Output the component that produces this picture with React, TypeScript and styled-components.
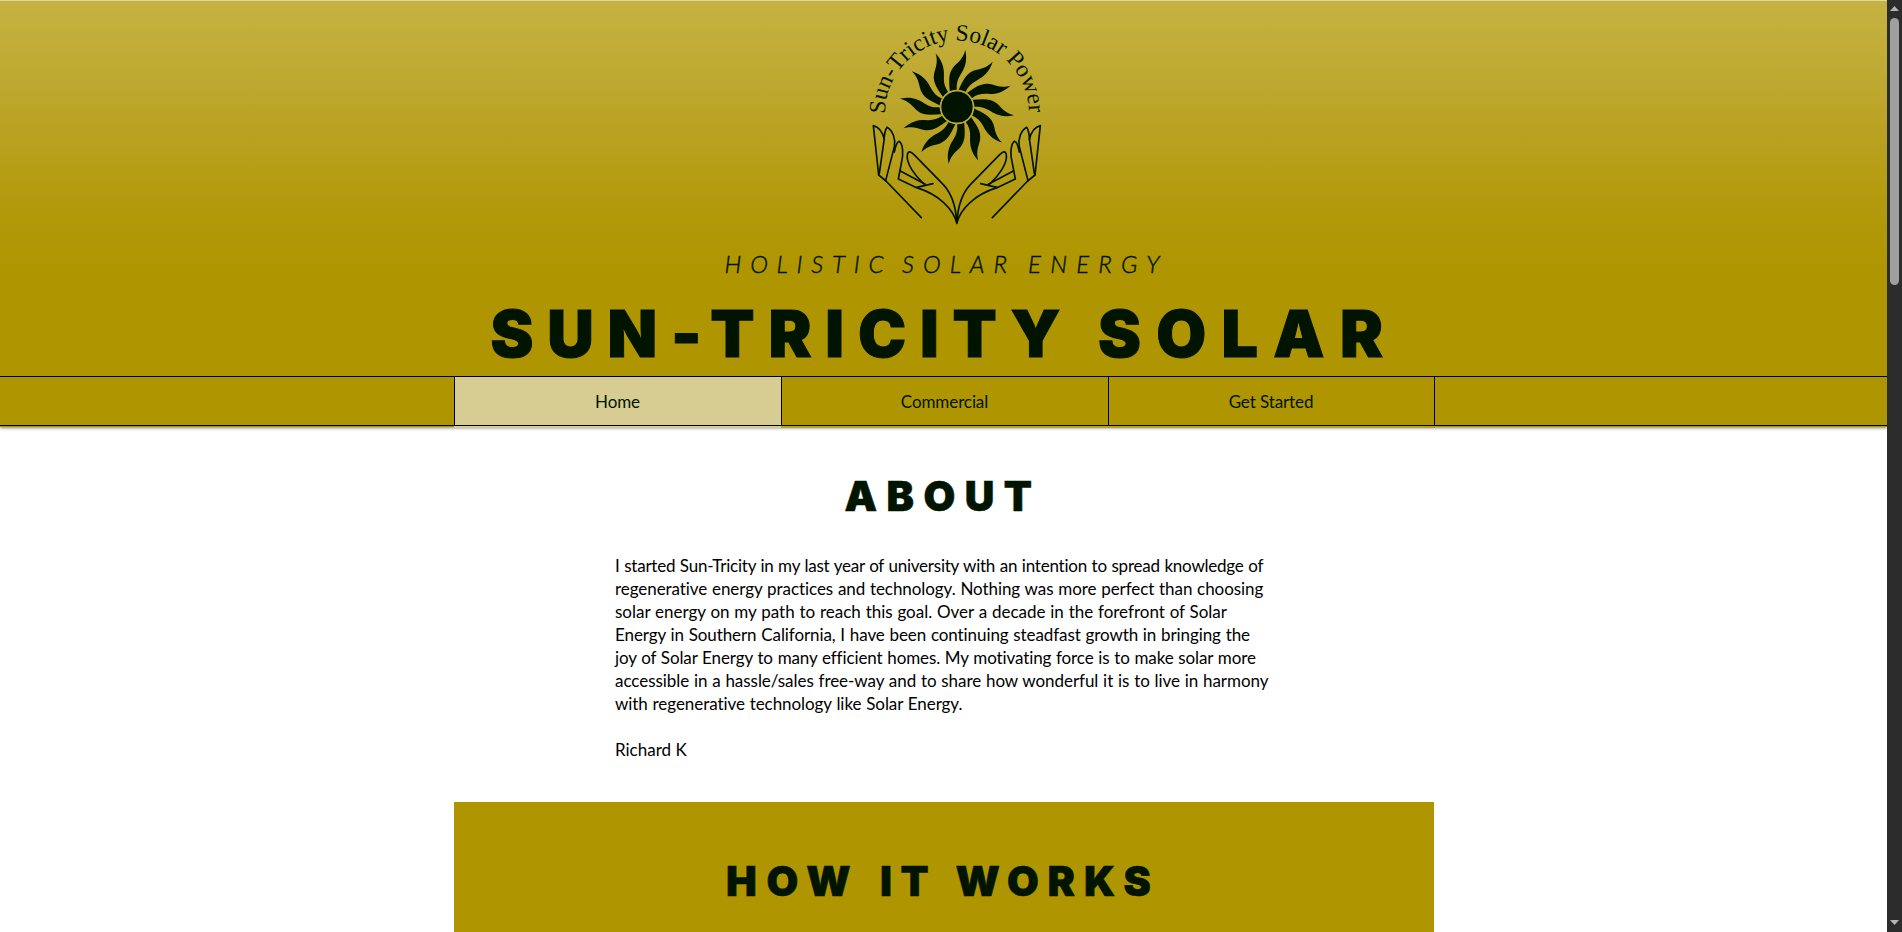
import React from 'react';
import styled, { createGlobalStyle } from 'styled-components';

const INK = '#001400';
const GOLD = '#af9500';

const GlobalStyle = createGlobalStyle`
  html, body { margin: 0; padding: 0; background: #fff; overflow: hidden; }
  * { box-sizing: border-box; }
`;

const Window = styled.div`
  display: flex;
  width: 100%;
  height: 932px;
  overflow: hidden;
  font-family: Lato, 'Liberation Sans', sans-serif;
`;

const Page = styled.div`
  flex: 1;
  min-width: 0;
  height: 932px;
  overflow: hidden;
  background: #fff;
`;

const Header = styled.header`
  height: 427px;
  border-top: 1px solid #e0d7a0;
  background: linear-gradient(#c5b242 0, #bca62b 100px, #b39a0d 200px, ${GOLD} 270px);
  box-shadow: 0 1px 3px rgba(0, 0, 0, 0.5);
`;

const Masthead = styled.div`
  width: 980px;
  height: 375px;
  margin-left: 454px;
  display: flex;
  flex-direction: column;
`;

const Logo = styled.svg`
  display: block;
  width: 210px;
  height: 240px;
  margin-left: 396px;
  overflow: visible;
`;

const Words = styled.div<{ $left: number }>`
  display: flex;
  padding-left: ${p => p.$left}px;
  white-space: nowrap;
  color: ${INK};
  font-variant-ligatures: none;
`;

const Tagline = styled(Words)`
  margin-top: 8px;
  font-size: 24px;
  line-height: 30px;
  font-style: italic;
  font-weight: 300;
  -webkit-text-stroke: 0.4px ${INK};
`;

const Title = styled(Words).attrs({ as: 'h1' })`
  margin: 23px 0 0;
  font: 900 64.5px/64px Inter, sans-serif;
  -webkit-text-stroke: 1px ${INK};
`;

const Heading = styled(Words).attrs({ as: 'h2' })`
  margin: 0;
  font: 900 41px/50px Inter, sans-serif;
  -webkit-text-stroke: 0.6px ${INK};
`;

const Word = styled.span<{ $w: number; $track: number }>`
  flex: none;
  width: ${p => p.$w}px;
  letter-spacing: ${p => p.$track}px;
`;

const Nav = styled.nav`
  height: 50px;
  padding-left: 454px;
  display: flex;
  border-top: 1px solid #000;
  border-bottom: 1px solid #000;
`;

const NavItem = styled.a<{ $w: number; $active?: boolean }>`
  width: ${p => p.$w}px;
  padding-right: 1px;
  display: flex;
  align-items: center;
  justify-content: center;
  border-left: 1px solid #000;
  background: ${p => (p.$active ? '#d7cd92' : GOLD)};
  color: ${INK};
  font-size: 17px;
  letter-spacing: -0.1px;
  &:last-child { border-right: 1px solid #000; }
`;

const NavEdge = styled.div`
  width: 981px;
  height: 2px;
  margin-left: 454px;
  display: flex;
`;

const EdgePart = styled.span<{ $w: number; $active?: boolean }>`
  width: ${p => p.$w}px;
  background: ${p => (p.$active ? '#d3caa0' : '#b7a02c')};
`;

const About = styled.section`
  height: 375px;
  padding-top: 44px;
`;

const Story = styled.div`
  margin: 33px 0 0 615px;
  color: #000;
  font-size: 17px;
  line-height: 23px;
  white-space: nowrap;
  font-variant-ligatures: none;
`;

const Line = styled.div<{ $track: number }>`
  letter-spacing: ${p => p.$track}px;
  word-spacing: 0.5px;
`;

const Signature = styled.div`
  margin-top: 23px;
`;

const HowPanel = styled.section`
  width: 980px;
  height: 130px;
  margin-left: 454px;
  padding-top: 54px;
  background: ${GOLD};
`;

const ScrollTrack = styled.div`
  width: 15px;
  height: 932px;
  padding: 6px 0 7px;
  display: flex;
  flex-direction: column;
  align-items: center;
  background: #2c2c2c;
`;

const Thumb = styled.div`
  width: 9px;
  height: 267px;
  margin: 7px 0 auto;
  border-radius: 5px;
  background: #9f9f9f;
`;

const Arrow = styled.svg`
  display: block;
  width: 9px;
  height: 5px;
`;

const RAY =
  'M-7.2,-15.6 C-7.6,-24 -9.4,-33 -3.5,-40 C0.5,-44.5 6,-47.5 8.3,-57 C10.8,-46 7.6,-38.5 3.6,-32.5 C0.4,-27.5 -0.8,-23 -0.2,-17.3 Z';

const Hand = () => (
  <g fill="none" stroke={INK} strokeWidth="5" strokeLinejoin="round" strokeLinecap="round">
    <path d="M86,195 L70,47 C86,51 98,68 103,88" />
    <path d="M88,190 L102,92 C103,74 105,60 111,52 C128,62 138,86 133,110 L107,212" />
    <path d="M133,126 C137,106 141,95 147,94 C158,100 162,130 154,160 L145,207 L200,233 C268,254 310,298 320,338" />
    <path d="M86,195 L108,213 L214,323" />
    <path d="M151,183 L226,223" />
    <path d="M200,232 L249,221" />
    <path d="M222,222 C194,196 168,160 172,134 C175,121 183,125 192,134 L280,224 C304,250 318,290 320,338" />
  </g>
);

const SunLogo = () => (
  <Logo viewBox="850 1 210 240">
    <defs>
      <path id="arc" d="M885,114 A72,73.500 0 0 1 1029,114" />
    </defs>
    <text fill={INK} fontFamily="'Liberation Serif', serif" fontSize="23.5">
      <textPath href="#arc" textLength="227" lengthAdjust="spacing">Sun-Tricity Solar Power</textPath>
    </text>
    <g transform="translate(957 107)" fill={INK}>
      <circle r="15.8" />
      {Array.from({ length: 12 }, (_, i) => (
        <path key={i} d={RAY} transform={`rotate(${i * 30})`} />
      ))}
      <circle r="16.6" fill="none" stroke="#bda82f" strokeWidth="1.5" />
    </g>
    <g transform="translate(850 110) scale(.33333)">
      <Hand />
      <g transform="translate(641 0) scale(-1 1)">
        <Hand />
      </g>
      <path d="M312,316 L320.500,345 L329,316 L320.500,328 Z" fill={INK} />
    </g>
  </Logo>
);

const story: [string, number][] = [
  ['I started Sun-Tricity in my last year of university with an intention to spread knowledge of', -0.225],
  ['regenerative energy practices and technology. Nothing was more perfect than choosing', -0.065],
  ['solar energy on my path to reach this goal. Over a decade in the forefront of Solar', -0.015],
  ['Energy in Southern California, I have been continuing steadfast growth in bringing the', -0.085],
  ['joy of Solar Energy to many efficient homes. My motivating force is to make solar more', -0.11],
  ['accessible in a hassle/sales free-way and to share how wonderful it is to live in harmony', -0.05],
  ['with regenerative technology like Solar Energy.', -0.06],
];

export default function App() {
  return (
    <>
      <GlobalStyle />
      <Window>
        <Page>
          <Header>
            <Masthead>
              <SunLogo />
              <Tagline $left={270.5}>
                <Word $w={177.5} $track={8.8}>HOLISTIC</Word>
                <Word $w={126} $track={9}>SOLAR</Word>
                <Word $w={150} $track={9.2}>ENERGY</Word>
              </Tagline>
              <Title $left={36.5}>
                <Word $w={607.5} $track={13.8}>SUN-TRICITY</Word>
                <Word $w={300} $track={15.3}>SOLAR</Word>
              </Title>
            </Masthead>
            <Nav>
              <NavItem $w={327} $active>Home</NavItem>
              <NavItem $w={327}>Commercial</NavItem>
              <NavItem $w={327}>Get Started</NavItem>
            </Nav>
            <NavEdge>
              <EdgePart $w={327} $active />
              <EdgePart $w={654} />
            </NavEdge>
          </Header>
          <About>
            <Heading $left={844.5}>
              <Word $w={220} $track={9.5}>ABOUT</Word>
            </Heading>
            <Story>
              {story.map(([text, track]) => (
                <Line key={text} $track={track}>{text}</Line>
              ))}
              <Signature>Richard K</Signature>
            </Story>
          </About>
          <HowPanel>
            <Heading $left={272}>
              <Word $w={154} $track={9.8}>HOW</Word>
              <Word $w={75.500} $track={8.5}>IT</Word>
              <Word $w={220} $track={8.9}>WORKS</Word>
            </Heading>
          </HowPanel>
        </Page>
        <ScrollTrack>
          <Arrow viewBox="0 0 9 5"><path d="M4.5 0 L9 5 H0 Z" fill="#b4b4b4" /></Arrow>
          <Thumb />
          <Arrow viewBox="0 0 9 5"><path d="M0 0 H9 L4.500 5 Z" fill="#b4b4b4" /></Arrow>
        </ScrollTrack>
      </Window>
    </>
  );
}
